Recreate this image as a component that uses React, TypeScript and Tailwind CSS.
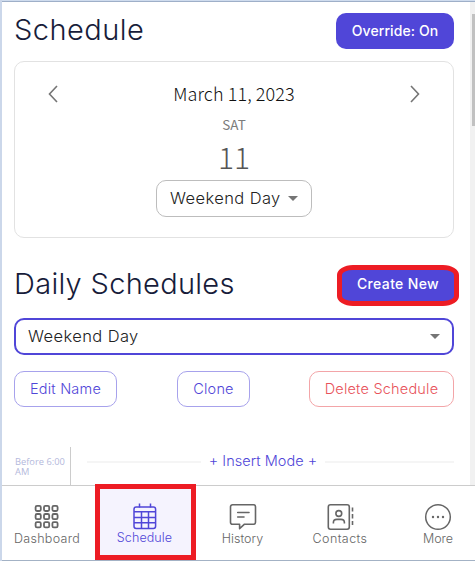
const navItems = [
  { label: "Dashboard", icon: <GridIcon />, box: "w-[93px] border-t border-[#ccc] pr-[3px] pt-[17px] text-[#666] tracking-[0.3px]" },
  {
    label: "Schedule",
    icon: <CalendarIcon />,
    box: "-mt-px w-[101px] border-[5px] border-[#ed1c24] bg-[#f5f3fe] pr-[2px] pt-[13px] text-[#5046d8] tracking-[0.1px]",
  },
  { label: "History", icon: <MessageIcon />, box: "w-[93px] border-t border-[#ccc] pt-[17px] text-[#666] tracking-[0px]" },
  { label: "Contacts", icon: <ContactsIcon />, box: "w-[102px] border-t border-[#ccc] pt-[17px] text-[#666] tracking-[0.4px]" },
  { label: "More", icon: <MoreIcon />, box: "w-[84px] border-t border-[#ccc] pl-[10px] pt-[17px] text-[#666] tracking-[0px]" },
];

function GridIcon() {
  return (
    <svg width="28" height="28" viewBox="0 0 28 28" fill="none" stroke="currentColor" strokeWidth="1.8">
      {[2.8, 11, 19.2].map((y) =>
        [2.6, 11, 19.4].map((x) => (
          <rect key={`${x}-${y}`} x={x} y={y} width="5.2" height="5.2" rx="1.4" />
        ))
      )}
    </svg>
  );
}

function CalendarIcon() {
  return (
    <svg width="28" height="28" viewBox="0 0 28 28" fill="none" stroke="currentColor" strokeWidth="1.5">
      <rect x="3" y="5" width="21.6" height="21.4" rx="2.2" />
      <path d="M8.5 1.500v4M19.5 1.500v4M3 9.8h21.5M3 15.4h21.5M3 20.8h21.5M10.5 9.8v16.500M17.5 9.8v16.500" />
    </svg>
  );
}

function MessageIcon() {
  return (
    <svg width="28" height="28" viewBox="0 0 28 28" fill="none" stroke="currentColor" strokeWidth="1.6" strokeLinejoin="round" strokeLinecap="round">
      <path d="M3.500 1.800h21a2 2 0 0 1 2 2v15.400a2 2 0 0 1-2 2H15.500L10.600 25.600V21.200H3.500a2 2 0 0 1-2-2V3.800a2 2 0 0 1 2-2Z" />
      <path d="M8.700 9.500H20M8.700 14H15" />
    </svg>
  );
}

function ContactsIcon() {
  return (
    <svg width="28" height="28" viewBox="0 0 28 28" fill="none" stroke="currentColor" strokeWidth="1.6">
      <rect x="2.300" y="1.800" width="21" height="24.400" rx="2.200" />
      <circle cx="12.800" cy="10.500" r="2.900" />
      <path d="M7.400 20.400v-.8c0-2 1.500-3.200 3.400-3.200h4.200c1.900 0 3.400 1.200 3.400 3.200v.8" />
      <path d="M26.500 4.500v4M26.500 11v4.500M26.500 18v4" />
    </svg>
  );
}

function MoreIcon() {
  return (
    <svg width="28" height="28" viewBox="0 0 28 28" fill="none" stroke="currentColor" strokeWidth="1.5">
      <circle cx="14" cy="14" r="12.300" />
      <g fill="currentColor" stroke="none">
        <circle cx="9" cy="14" r="1.200" />
        <circle cx="14" cy="14" r="1.200" />
        <circle cx="19" cy="14" r="1.200" />
      </g>
    </svg>
  );
}

function Chevron({ d }: { d: string }) {
  return (
    <svg width="10" height="18" viewBox="0 0 10 18" fill="none" stroke="#757575" strokeWidth="1.6">
      <path d={d} />
    </svg>
  );
}

function Caret() {
  return (
    <svg width="10" height="5" viewBox="0 0 10 5" fill="#757575">
      <path d="M0 0h10L5 5Z" />
    </svg>
  );
}

function OutlineButton({ className, label }: { className: string; label: string }) {
  return (
    <button className={`h-9 shrink-0 whitespace-nowrap rounded-[10px] border pb-px text-[14.5px] tracking-[0.2px] ${className}`}>
      {label}
    </button>
  );
}

export default function App() {
  return (
    <div className="flex h-[561px] w-[475px] flex-col overflow-hidden border-l-2 border-[#cbd7ea] bg-white font-['Inter',sans-serif] font-light">
      <div className="h-0.5 shrink-0 border-b border-[#9eafc8] bg-[#cfdcee]" />

      <div className="flex h-[483px] shrink-0">
        <main className="w-[468px] shrink-0 overflow-hidden pl-3 pr-4 pt-[11px]">
          <div className="flex h-9 items-center justify-between">
            <h1 className="whitespace-nowrap pb-0.5 text-[29px] leading-9 tracking-[0.45px] text-[#171c3a]">Schedule</h1>
            <button className="h-9 w-[118px] whitespace-nowrap rounded-[10px] bg-[#5046d8] text-sm font-medium tracking-[0.1px] text-white">
              Override: On
            </button>
          </div>

          {/* Day picker */}
          <section className="mt-3 flex h-[177px] flex-col items-center rounded-[10px] border border-[#e2e2e2] font-['Noto_Sans_CJK_JP',sans-serif]">
            <div className="mt-[18px] flex h-7 w-full items-center justify-between px-[33px]">
              <Chevron d="M9 1 1.500 9 9 17" />
              <span className="whitespace-nowrap pb-0.5 text-lg leading-7 tracking-[0.1px] text-[#111]">March 11, 2023</span>
              <Chevron d="M1 1 8.500 9 1 17" />
            </div>
            <div className="mt-1.5 h-5 text-[13.5px] font-normal leading-5 text-[#7c7c7c]">SAT</div>
            <div className="mt-1 h-9 text-[30px] font-light leading-9 text-[#555]">11</div>
            <button className="mt-1.5 flex h-[37px] w-[156px] shrink-0 items-center justify-between rounded-[10px] border border-[#bdbdbd] px-[13px] font-['Inter',sans-serif] text-[16.5px] tracking-[0.4px] text-[#222]">
              <span className="whitespace-nowrap pb-px">Weekend Day</span>
              <Caret />
            </button>
          </section>

          <div className="mt-[27px] flex h-[41px] items-center justify-between">
            <h2 className="whitespace-nowrap pb-1 text-[29px] leading-9 tracking-[0.3px] text-[#171c3a]">Daily Schedules</h2>
            <button className="-mr-[5px] h-[41px] w-[122px] whitespace-nowrap rounded-[16px/10px] border-[5px] border-[#ed1c24] bg-[#5046d8] pb-1 text-sm font-medium tracking-[0.35px] text-white">
              Create New
            </button>
          </div>

          <div className="mt-3 flex h-[37px] items-center justify-between rounded-[10px] border-2 border-[#5046d8] px-3 text-[16.5px] tracking-[0.4px] text-[#222]">
            <span className="whitespace-nowrap pb-px">Weekend Day</span>
            <Caret />
          </div>

          <div className="mt-4 flex">
            <OutlineButton className="w-[103px] border-[#a7a2ec] text-[#5046d8]" label="Edit Name" />
            <OutlineButton className="ml-[60px] w-[73px] border-[#a7a2ec] text-[#5046d8]" label="Clone" />
            <OutlineButton className="ml-auto w-[145px] border-[#f3a5a8] text-[#e8525a]" label="Delete Schedule" />
          </div>

          {/* First hour of the timeline */}
          <div className="mt-10 flex h-[38px]">
            <div className="w-[57px] shrink-0 border-r border-[#ccc] pl-px pt-[10px] font-['Open_Sans',sans-serif] text-[9.300px] font-normal leading-[10px] text-[#b4b9dc]">
              Before 6:00 AM
            </div>
            <div className="ml-4 flex h-[30px] flex-1 items-center">
              <span className="h-0.5 w-[114px] bg-[#f5f5f5]" />
              <span className="w-[124px] whitespace-nowrap pb-0.5 text-center text-[14.5px] tracking-[0.05px] text-[#5046d8]">
                + Insert Mode +
              </span>
              <span className="h-0.5 flex-1 bg-[#f5f5f5]" />
            </div>
          </div>
        </main>
        <div className="w-[5px] shrink-0 bg-[#f1f1f1] pl-0.5 pt-3">
          <div className="h-28 bg-[#c1c1c1]" />
        </div>
      </div>

      <nav className="flex h-[76px] shrink-0 border-b border-[#a3b2c5]">
        {navItems.map((item) => (
          <a key={item.label} className={`flex shrink-0 flex-col items-center whitespace-nowrap text-[12.5px] leading-4 ${item.box}`}>
            {item.icon}
            <span>{item.label}</span>
          </a>
        ))}
      </nav>
    </div>
  );
}
